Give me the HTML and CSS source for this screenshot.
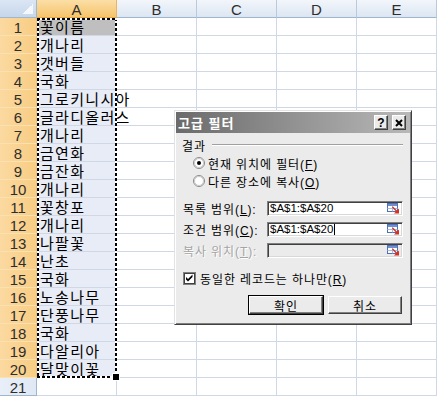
FILE: index.html
```html
<!DOCTYPE html>
<html lang="ko">
<head>
<meta charset="utf-8">
<title>고급 필터</title>
<link rel="stylesheet" href="styles.css">
</head>
<body>
<div class="wrap">
<div class="sheet">
  <div class="corner"></div><div class="ch sel">A</div><div class="ch">B</div><div class="ch">C</div><div class="ch">D</div><div class="ch">E</div>
  <div class="rh">1</div><div class="a top">꽃이름</div><div></div><div></div><div></div><div></div>
  <div class="rh">2</div><div class="a">개나리</div><div></div><div></div><div></div><div></div>
  <div class="rh">3</div><div class="a">갯버들</div><div></div><div></div><div></div><div></div>
  <div class="rh">4</div><div class="a">국화</div><div></div><div></div><div></div><div></div>
  <div class="rh">5</div><div class="a">그로키니시아</div><div></div><div></div><div></div><div></div>
  <div class="rh">6</div><div class="a">글라디올러스</div><div></div><div></div><div></div><div></div>
  <div class="rh">7</div><div class="a">개나리</div><div></div><div></div><div></div><div></div>
  <div class="rh">8</div><div class="a">금연화</div><div></div><div></div><div></div><div></div>
  <div class="rh">9</div><div class="a">금잔화</div><div></div><div></div><div></div><div></div>
  <div class="rh">10</div><div class="a">개나리</div><div></div><div></div><div></div><div></div>
  <div class="rh">11</div><div class="a">꽃창포</div><div></div><div></div><div></div><div></div>
  <div class="rh">12</div><div class="a">개나리</div><div></div><div></div><div></div><div></div>
  <div class="rh">13</div><div class="a">나팔꽃</div><div></div><div></div><div></div><div></div>
  <div class="rh">14</div><div class="a">난초</div><div></div><div></div><div></div><div></div>
  <div class="rh">15</div><div class="a">국화</div><div></div><div></div><div></div><div></div>
  <div class="rh">16</div><div class="a">노송나무</div><div></div><div></div><div></div><div></div>
  <div class="rh">17</div><div class="a">단풍나무</div><div></div><div></div><div></div><div></div>
  <div class="rh">18</div><div class="a">국화</div><div></div><div></div><div></div><div></div>
  <div class="rh">19</div><div class="a">다알리아</div><div></div><div></div><div></div><div></div>
  <div class="rh">20</div><div class="a">달맞이꽃</div><div></div><div></div><div></div><div></div>
  <div class="rh n">21</div><div></div><div></div><div></div><div></div><div></div>
</div>
<div class="overlay"><div class="ants"></div></div>
</div>

<div class="dialog">
  <div class="title">
    <span class="t">고급 필터</span>
    <span class="tbtn">?</span>
    <span class="tbtn"><svg width="8" height="8" viewBox="0 0 8 8"><path d="M1 1 L7 7 M7 1 L1 7" stroke="#000" stroke-width="2"/></svg></span>
  </div>
  <div class="body">
    <div class="group"><span>결과</span><span class="line"></span></div>
    <div class="radio">
      <svg class="rdot" width="12" height="12" viewBox="0 0 12 12"><circle cx="6" cy="6" r="5.5" fill="#fff" stroke="#8a8a8a"/><circle cx="6" cy="6" r="4.5" fill="none" stroke="#c8c8c8"/><circle cx="6" cy="6" r="2" fill="#000"/></svg>
      <span>현재 위치에 필터(<u>F</u>)</span>
    </div>
    <div class="radio">
      <svg class="rdot" width="12" height="12" viewBox="0 0 12 12"><circle cx="6" cy="6" r="5.5" fill="#fff" stroke="#8a8a8a"/><circle cx="6" cy="6" r="4.5" fill="none" stroke="#c8c8c8"/></svg>
      <span>다른 장소에 복사(<u>O</u>)</span>
    </div>
    <div class="range first">
      <span class="lab">목록 범위(<u>L</u>):</span>
      <div class="field"><span class="val">$A$1:$A$20</span>
        <svg class="ref" width="14" height="11" viewBox="0 0 14 11"><rect x="1.5" y="0.5" width="10" height="8" fill="#fff" stroke="#4b6fb8"/><rect x="2" y="1" width="9" height="2" fill="#6f8fd0"/><line x1="1.5" y1="5.5" x2="11.5" y2="5.5" stroke="#a8bbe2"/><line x1="6.5" y1="3" x2="6.5" y2="8.5" stroke="#a8bbe2"/><path d="M6 4.5 L7 3.5 L11 7.5 L13 5.5 L13 10.5 L8 10.5 L10 8.5 Z" fill="#d8321e"/></svg>
      </div>
    </div>
    <div class="range">
      <span class="lab">조건 범위(<u>C</u>):</span>
      <div class="field"><span class="val">$A$1:$A$20<span class="caret"></span></span>
        <svg class="ref" width="14" height="11" viewBox="0 0 14 11"><rect x="1.5" y="0.5" width="10" height="8" fill="#fff" stroke="#4b6fb8"/><rect x="2" y="1" width="9" height="2" fill="#6f8fd0"/><line x1="1.5" y1="5.5" x2="11.5" y2="5.5" stroke="#a8bbe2"/><line x1="6.5" y1="3" x2="6.5" y2="8.5" stroke="#a8bbe2"/><path d="M6 4.5 L7 3.5 L11 7.5 L13 5.5 L13 10.5 L8 10.5 L10 8.5 Z" fill="#d8321e"/></svg>
      </div>
    </div>
    <div class="range">
      <span class="lab off">복사 위치(<u>T</u>):</span>
      <div class="field dis"><span class="val"></span>
        <svg class="ref" width="14" height="11" viewBox="0 0 14 11"><rect x="1.5" y="0.5" width="10" height="8" fill="#fff" stroke="#4b6fb8"/><rect x="2" y="1" width="9" height="2" fill="#6f8fd0"/><line x1="1.5" y1="5.5" x2="11.5" y2="5.5" stroke="#a8bbe2"/><line x1="6.5" y1="3" x2="6.5" y2="8.5" stroke="#a8bbe2"/><path d="M6 4.5 L7 3.5 L11 7.5 L13 5.5 L13 10.5 L8 10.5 L10 8.5 Z" fill="#d8321e"/></svg>
      </div>
    </div>
    <div class="check">
      <svg class="cbox" width="13" height="13" viewBox="0 0 13 13"><rect x="0.5" y="0.5" width="12" height="12" fill="#fff" stroke="#808080"/><rect x="1.5" y="1.5" width="10" height="10" fill="none" stroke="#404040"/><path d="M3 5 L5 7 L9.5 2.5 L9.5 5 L5 9.5 L3 7.5 Z" fill="#000"/></svg>
      <span>동일한 레코드는 하나만(<u>R</u>)</span>
    </div>
    <div class="btns">
      <div class="btn def">확인</div>
      <div class="btn">취소</div>
    </div>
  </div>
</div>
</body>
</html>
```

FILE: styles.css
```css
* { box-sizing: border-box; }
html, body { margin: 0; padding: 0; background: #fff; }
body {
  width: 437px;
  height: 397px;
  overflow: hidden;
  position: relative;
  font-family: "Noto Sans CJK KR", sans-serif;
}

.wrap { display: grid; }
.sheet, .overlay { grid-area: 1 / 1; }

.sheet, .overlay {
  display: grid;
  grid-template-columns: 37px repeat(5, 80px);
  grid-auto-rows: 18px;
}
.overlay { grid-template-rows: repeat(22, 18px); pointer-events: none; }

.sheet > div {
  border-right: 1px solid #d0d7e5;
  border-bottom: 1px solid #d0d7e5;
}

.sheet > .corner {
  background:
    linear-gradient(135deg, transparent 50%, #f4f7fb 50%) right 3px bottom 3px / 10px 10px no-repeat,
    linear-gradient(#dbe6f4, #c6d6eb);
  border-right-color: #9eb6ce;
  border-bottom-color: #9eb6ce;
}

.sheet > .ch {
  background: linear-gradient(#f2f6fb, #dce6f2);
  border-right-color: #b9cadf;
  border-bottom-color: #9eb6ce;
  text-align: center;
  font: 15px/19px "Liberation Sans", sans-serif;
  color: #2e2e2e;
}
.sheet > .ch.sel {
  background: linear-gradient(#fbdfa6, #f6c46c);
  border-right-color: #eab463;
  border-bottom-color: #e5a646;
}

.sheet > .rh {
  background: linear-gradient(to right, #fbd9a0, #f8cd84);
  border-right-color: #f0be74;
  border-bottom-color: #fbe0b0;
  text-align: center;
  font: 15px/19px "Liberation Sans", sans-serif;
  color: #2e2e2e;
}
.sheet > .rh.n {
  background: linear-gradient(to right, #e9eff8, #dfe8f4);
  border-right-color: #9eb6ce;
  border-bottom-color: #9eb6ce;
}

.sheet > .a {
  background: #e8ecf7;
  padding-left: 3px;
  font-size: 15px;
  line-height: 17px;
  letter-spacing: 1.3px;
  white-space: nowrap;
  color: #000;
}
.sheet > .a.top { background: #bfbfbf; }

.ants {
  grid-column: 2;
  grid-row: 2 / 22;
  position: relative;
  background:
    repeating-linear-gradient(90deg, #000 0 3px, #fff 3px 5px) left top / 100% 2px no-repeat,
    repeating-linear-gradient(90deg, #000 0 3px, #fff 3px 5px) left bottom / 100% 2px no-repeat,
    repeating-linear-gradient(180deg, #000 0 3px, #fff 3px 5px) left top / 2px 100% no-repeat,
    repeating-linear-gradient(180deg, #000 0 3px, #fff 3px 5px) right top / 2px 100% no-repeat;
}
.ants::after {
  content: "";
  position: absolute;
  right: -3px;
  bottom: -3px;
  width: 6px;
  height: 6px;
  background: #000;
  border: 1px solid #fff;
}

/* dialog */
.dialog {
  position: absolute;
  left: 174px;
  top: 110px;
  width: 238px;
  height: 215px;
  background: #ebebeb;
  border: 1px solid;
  border-color: #e2e2e2 #404040 #404040 #e2e2e2;
  box-shadow: inset 1px 1px #fff, inset -1px -1px #808080;
  padding: 1px;
  display: flex;
  flex-direction: column;
  font: 12px "Liberation Sans", "Noto Sans CJK KR", sans-serif;
  letter-spacing: 0.9px;
  color: #000;
}
.title {
  flex: none;
  height: 21px;
  display: flex;
  align-items: center;
  padding: 0 4px 0 2px;
  background: linear-gradient(to right, #6b6b6b, #b8b8b8);
  color: #fff;
  font-weight: bold;
  font-size: 13px;
}
.title .t { flex: 1; font-family: "Noto Sans CJK KR", sans-serif; letter-spacing: 1px; }
.tbtn {
  width: 14px;
  height: 15px;
  margin-left: 4px;
  background: #ebebeb;
  border: 1px solid;
  border-color: #fff #404040 #404040 #fff;
  box-shadow: inset -1px -1px #808080;
  display: flex;
  align-items: center;
  justify-content: center;
  color: #000;
  letter-spacing: 0;
  font: bold 12px "Liberation Sans", sans-serif;
}

.body {
  padding: 3px 7px 0 7px;
  display: flex;
  flex-direction: column;
}
u { text-decoration: underline; text-underline-offset: 1px; }

.group {
  height: 18px;
  display: flex;
  align-items: center;
  margin-left: -1px;
}
.group .line {
  flex: 1;
  margin-left: 6px;
  height: 2px;
  border-top: 1px solid #a0a0a0;
  border-bottom: 1px solid #fff;
}

.radio {
  height: 18px;
  display: flex;
  align-items: center;
  padding-left: 10px;
}
.rdot { flex: none; margin-right: 3px; }

.range {
  height: 15px;
  display: flex;
  align-items: center;
  margin-top: 6px;
}
.range.first { margin-top: 11px; }
.lab { width: 84px; flex: none; white-space: nowrap; }
.lab.off { color: #a4a4a4; text-shadow: 1px 1px #fff; }

.field {
  flex: 1;
  height: 15px;
  display: flex;
  align-items: center;
  justify-content: space-between;
  padding: 0 2px 0 2px;
  background: #fff;
  border: 1px solid;
  border-color: #808080 #fff #fff #808080;
  box-shadow: inset 1px 1px #404040, inset -1px -1px #d8d8d8;
}
.field.dis { background: #ebebeb; }
.val {
  display: flex;
  align-items: center;
  letter-spacing: 0;
  font: 11.5px/13px "Liberation Sans", sans-serif;
}
.caret {
  width: 1px;
  height: 11px;
  background: #000;
  margin-left: 1px;
}
.ref { flex: none; }

.check {
  height: 13px;
  display: flex;
  align-items: center;
  margin-top: 14px;
}
.cbox { flex: none; margin-right: 4px; }

.btns {
  display: flex;
  justify-content: flex-end;
  gap: 5px;
  margin-top: 11px;
  padding-right: 1px;
}
.btn {
  width: 74px;
  height: 18px;
  display: flex;
  align-items: center;
  justify-content: center;
  background: #ebebeb;
  border: 1px solid;
  border-color: #fff #404040 #404040 #fff;
  box-shadow: inset -1px -1px #808080;
  font-family: "Noto Sans CJK KR", sans-serif;
}
.btn.def { outline: 1px solid #000; }
```
